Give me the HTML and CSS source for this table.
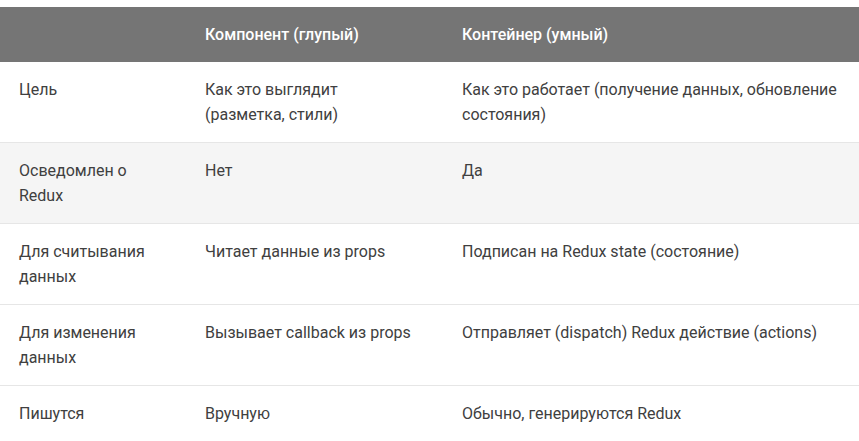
FILE: index.html
```html
<!DOCTYPE html>
<html lang="ru">
<head>
<meta charset="utf-8">
<link rel="stylesheet" href="styles.css">
</head>
<body>
<div class="wrap">
<table class="cmp">
<colgroup><col class="c1"><col class="c2"><col class="c3"></colgroup>
<thead>
<tr><th></th><th>Компонент (глупый)</th><th>Контейнер (умный)</th></tr>
</thead>
<tbody>
<tr><td>Цель</td><td>Как это выглядит (разметка, стили)</td><td>Как это работает (получение данных, обновление состояния)</td></tr>
<tr class="alt"><td>Осведомлен о Redux</td><td>Нет</td><td>Да</td></tr>
<tr><td>Для считывания данных</td><td>Читает данные из props</td><td>Подписан на Redux state (состояние)</td></tr>
<tr><td>Для изменения данных</td><td>Вызывает callback из props</td><td>Отправляет (dispatch) Redux действие (actions)</td></tr>
<tr><td>Пишутся</td><td>Вручную</td><td>Обычно, генерируются Redux</td></tr>
</tbody>
</table>
</div>
</body>
</html>
```
FILE: styles.css
```css
html, body { margin: 0; padding: 0; background: #fff; }
.wrap { padding-top: 7px; }
.cmp {
  width: 859px;
  border-collapse: collapse;
  table-layout: fixed;
  font-family: Roboto, "Noto Sans", sans-serif;
  font-size: 16px;
  line-height: 25px;
  color: #404040;
}
.c1 { width: 186px; }
.c2 { width: 257px; }
.c3 { width: 416px; }
.cmp th {
  background: #757575;
  color: #fff;
  font-weight: 500;
  text-align: left;
  padding: 15px 19px;
}
.cmp td {
  padding: 15px 19px 15px 19px;
  vertical-align: top;
  border-bottom: 1px solid #e6e6e6;
}
.cmp td:nth-child(2) { padding-right: 30px; }
.cmp tr.alt td { background: #f5f5f5; }
.cmp tbody tr:last-child td { border-bottom: none; }
```
